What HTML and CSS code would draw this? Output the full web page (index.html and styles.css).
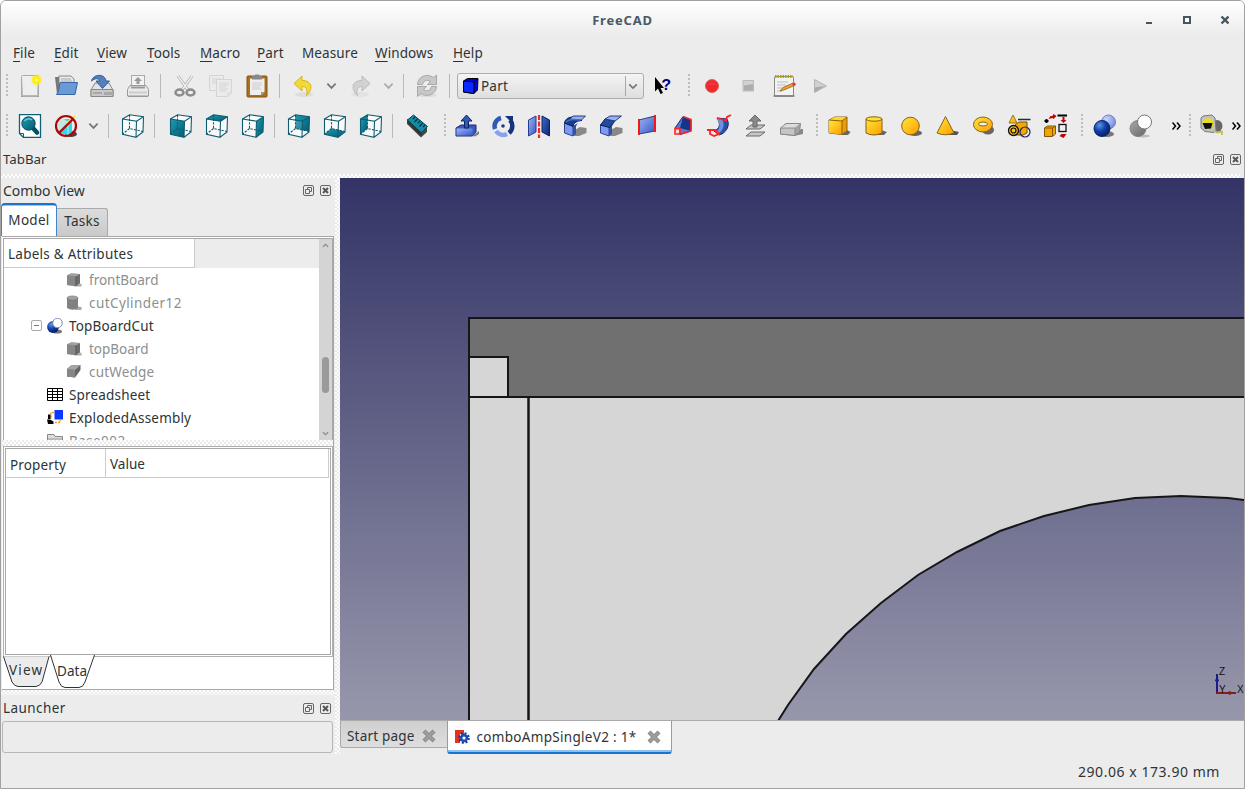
FILE: index.html
```
<!DOCTYPE html>
<html lang="en">
<head>
<meta charset="utf-8">
<title>FreeCAD</title>
<link rel="stylesheet" href="styles.css">
</head>
<body>
<svg class="defs" width="0" height="0">
  <defs>
    <linearGradient id="teal" x1="0" y1="0" x2="1" y2="1"><stop offset="0" stop-color="#1b9db4"/><stop offset="1" stop-color="#045a70"/></linearGradient>
    <linearGradient id="blue" x1="0" y1="0" x2="1" y2="1"><stop offset="0" stop-color="#a0b4f4"/><stop offset="1" stop-color="#3558c8"/></linearGradient>
    <linearGradient id="navy" x1="0" y1="0" x2="1" y2="1"><stop offset="0" stop-color="#3d6fd0"/><stop offset="1" stop-color="#0b2470"/></linearGradient>
    <linearGradient id="gray" x1="0" y1="0" x2="0" y2="1"><stop offset="0" stop-color="#f4f4f4"/><stop offset="1" stop-color="#b4b4b4"/></linearGradient>
    <linearGradient id="dark" x1="0" y1="0" x2="1" y2="1"><stop offset="0" stop-color="#aaa"/><stop offset="1" stop-color="#666"/></linearGradient>
    <linearGradient id="gold" x1="0" y1="0" x2="1" y2="1"><stop offset="0" stop-color="#ffe838"/><stop offset="1" stop-color="#ff9c00"/></linearGradient>
    <radialGradient id="ball" cx=".35" cy=".3" r=".75"><stop offset="0" stop-color="#5c96e8"/><stop offset=".5" stop-color="#123fa6"/><stop offset="1" stop-color="#031c64"/></radialGradient>
    <radialGradient id="pale" cx=".35" cy=".3" r=".75"><stop offset="0" stop-color="#c8d4ff"/><stop offset="1" stop-color="#6f88dc"/></radialGradient>
    <radialGradient id="sun"><stop offset="0" stop-color="#fff"/><stop offset=".3" stop-color="#fff200"/><stop offset=".7" stop-color="#ffee00" stop-opacity=".75"/><stop offset="1" stop-color="#fff200" stop-opacity="0"/></radialGradient>
    <linearGradient id="sky" x1="0" y1="0" x2="0" y2="1"><stop offset="0" stop-color="#333366"/><stop offset="1" stop-color="#9797ac"/></linearGradient>
    <symbol id="wire" viewBox="0 0 24 24"><g fill="none" stroke="#0e5c70" stroke-width="1.1"><path d="M2.5 5 16.5 7.2 16 23.2 2.5 20.2ZM2.5 5 9.5.7 23.5 2.7 16.5 7.2M23.5 2.7 23 18 16 23.2"/><path d="M9.5 1V14.5L23 17.5M9.5 14.5 2.5 20" stroke-dasharray="2.4 1.2"/></g></symbol>
    <symbol id="float" viewBox="0 0 11 11"><rect x=".5" y=".5" width="10" height="10" rx="1.5" fill="none" stroke="#666"/><path d="M4.5 2.5H8.5V6.5H4.5Z" fill="none" stroke="#666"/><path d="M2.5 4.5H6.5V8.500H2.5Z" fill="#ececec" stroke="#666"/></symbol>
    <symbol id="shut" viewBox="0 0 11 11"><rect x=".5" y=".5" width="10" height="10" rx="1.500" fill="none" stroke="#666"/><path d="M3 3 8 8M8 3 3 8" stroke="#555" stroke-width="2"/></symbol>
    <symbol id="chev" viewBox="0 0 12 8"><path d="M1.500 1.500 6 6 10.500 1.500" fill="none" stroke="currentColor" stroke-width="2"/></symbol>
    <symbol id="graybox" viewBox="0 0 16 16"><path d="M8 14 15.500 11.500V14.500H8Z" fill="#aaa"/><path d="M1 3.500 5 1.500 14 2V11.500L10 14 1 13Z" fill="#6d6d6d"/><path d="M1 3.500 10 4.500V14L1 13Z" fill="#868686"/><path d="M1 3.500 5 1.500 14 2 10 4.500Z" fill="#a0a0a0"/><path d="M10 4.500V14" stroke="#555"/></symbol>
    <symbol id="tabx" viewBox="0 0 14 14"><path d="M2 2 12 12M12 2 2 12" stroke="#858782" stroke-width="4.200"/><path d="M2.500 2.500 11.500 11.500M11.500 2.500 2.500 11.500" stroke="#9c9e99" stroke-width="2.600"/></symbol>
  </defs>
</svg>
<div class="window">
  <header class="titlebar">
    <span class="title">FreeCAD</span>
    <svg class="winbtns" width="84" height="12" viewBox="0 0 84 12"><path d="M1 9H7" stroke="#46565f" stroke-width="2"/><rect x="39" y="3" width="6" height="6" fill="#fff" stroke="#46565f" stroke-width="2"/><path d="M76.500 2.500 83.500 9.500M83.500 2.500 76.500 9.500" stroke="#46565f" stroke-width="2.400"/></svg>
  </header>
  <nav class="menu">
    <span class="m1"><u>F</u>ile</span><span class="m2"><u>E</u>dit</span><span class="m3"><u>V</u>iew</span><span class="m4"><u>T</u>ools</span><span class="m5"><u>M</u>acro</span><span class="m6"><u>P</u>art</span><span class="m7">Measure</span><span class="m8"><u>W</u>indows</span><span class="m9"><u>H</u>elp</span>
  </nav>

  <div class="bar bar1">
    <i class="handle first"></i>
    <svg class="tool" viewBox="0 0 24 24"><path d="M3 22.500H21" stroke="#888"/><rect x="3.500" y="1.500" width="17" height="21" rx="1" fill="url(#gray)" stroke="#aaa"/><rect x="5" y="3" width="14" height="18" fill="#eee"/><circle cx="18.500" cy="6" r="6" fill="url(#sun)"/></svg>
    <svg class="tool" viewBox="0 0 24 24"><path d="M1 3H8L9 5H20V19L3 20Z" fill="#777"/><path d="M5 2H17L20 5V11H5Z" fill="#e8e8e8" stroke="#888"/><path d="M7 5H17M7 7H18" stroke="#aaa"/><path d="M6 8.500H23.500L21 20.500H2.500C5 18 5 14 6 8.500Z" fill="#6a9ad4" stroke="#3767a8"/></svg>
    <svg class="tool" viewBox="0 0 24 24"><path d="M1 16 5 9H19L23 16V22.500H1Z" fill="#e2e2e2" stroke="#888"/><path d="M1 15.500H23V22.500H1Z" fill="#c8c8c8" stroke="#888"/><path d="M15 18V21M17 18V21M19 18V21M21 18V21M3 19H12" stroke="#888"/><path d="M1.500 7C3 0 15-1 16 7H19.500L12.500 14.500 6 7H9.500C9 4 5 4 1.500 7Z" fill="#5480ba" stroke="#315e9c"/></svg>
    <svg class="tool" viewBox="0 0 24 24"><rect x="5.500" y="1.500" width="13" height="12" fill="#f2f2f2" stroke="#aaa"/><path d="M12 3 16 7H13.500V10H10.500V7H8Z" fill="#999"/><path d="M1.500 15.500 4 11.500H20L22.500 15.500V22H1.500Z" fill="#eaeaea" stroke="#999"/><path d="M5 13.500H19" stroke="#999" stroke-width="2"/><path d="M2 22.500H22" stroke="#999"/><path d="M3 18.500H21" stroke="#ccc" stroke-width="2"/></svg>
    <i class="sep s11"></i>
    <svg class="tool" viewBox="0 0 24 24"><path d="M5 2 15 16M19 2 9 16" stroke="#aaa" stroke-width="3"/><path d="M5 2 15 16M19 2 9 16" stroke="#eee" stroke-width="1.500"/><ellipse cx="6.500" cy="18.500" rx="4" ry="3" fill="none" stroke="#8c8c8c" stroke-width="2.500"/><ellipse cx="17.500" cy="18.500" rx="4" ry="3" fill="none" stroke="#8c8c8c" stroke-width="2.500"/></svg>
    <svg class="tool" viewBox="0 0 24 24"><g fill="#ebebeb" stroke="#d4d4d4"><path d="M.5 1.500H14.500V16.500H.5Z"/><path d="M3 5H12M3 7H12M3 9H9"/><path d="M7.500 5.500H22.500V19L19 22.500H7.500Z"/><path d="M10 9H20M10 11H20M10 13H17M10 15H19M10 17H17M19 22V19H22"/></g></svg>
    <svg class="tool" viewBox="0 0 24 24"><rect x="2" y="2" width="20" height="21" rx="1" fill="#a87020" stroke="#855311"/><path d="M5 4.500H19.500V18L16 21H5Z" fill="#eee"/><path d="M7 9H17M7 11H17M7 13H15M7 15H16" stroke="#ccc"/><path d="M16 21V18H19.500Z" fill="#999"/><path d="M7 2H10V.5H14V2H17V5.500H7Z" fill="#888"/></svg>
    <i class="sep s10"></i>
    <svg class="tool" viewBox="0 0 24 24"><ellipse cx="13" cy="20.500" rx="9" ry="2.500" fill="#ddd"/><path d="M3 9.500 11 2V6.500C22 6.500 22 16 15.500 21.500 17 15 15 12.500 11 12.500V17Z" fill="#f4d838" stroke="#d4b61c"/></svg>
    <span class="drop d22"><svg width="11" height="8"><use href="#chev"/></svg></span>
    <svg class="tool" viewBox="0 0 24 24"><ellipse cx="11" cy="20.500" rx="9" ry="2.500" fill="#e2e2e2"/><path d="M21 9.500 13 2V6.500C2 6.500 2 16 8.500 21.500 7 15 9 12.500 13 12.500V17Z" fill="#d2d2d2" stroke="#bbb"/></svg>
    <span class="drop d20 off"><svg width="11" height="8"><use href="#chev"/></svg></span>
    <i class="sep s10"></i>
    <svg class="tool" viewBox="0 0 24 24"><ellipse cx="12" cy="21" rx="10" ry="2" fill="#ddd"/><g fill="#c8c8c8" stroke="#a8a8a8"><path d="M2.500 10.500C3 2 12-1 18.500 3.500L21.500 1V10.500H12.500L15.500 7.500C11.500 5 8.500 7 7.500 10.500Z"/><path d="M21.500 12.500C21 21 12 23.500 6 19.500L2.500 22.500V12.500H11.500L8.500 15.500C13 18.500 15.500 16 16.500 12.500Z"/></g></svg>
    <i class="sep s11b"></i>
    <div class="combo"><svg width="18" height="18" viewBox="0 0 18 18"><path d="M1.500 4 5.500 1.500H16L15.500 13 12 16.500 1.500 15Z" fill="#0000e0" stroke="#000"/><path d="M1.500 4 12 5V16.500L1.500 15Z" fill="#0a28ff" stroke="#000"/><path d="M12 5 16 1.500" stroke="#000"/></svg><span class="comboText">Part</span><span class="comboArrow"><svg width="10" height="7"><use href="#chev"/></svg></span></div>
    <svg class="tool" viewBox="0 0 24 24"><path d="M5 3V17.500L8 14.500 10.500 20 13 19 10.500 14H14Z" fill="#000"/><text x="11.500" y="16" class="qmark">?</text></svg>
    <i class="handle h14"></i>
    <svg class="tool" viewBox="0 0 24 24"><circle cx="12" cy="12" r="6.500" fill="#ef2929" stroke="#d86060"/><path d="M7 11Q12 4 17 11Z" fill="#f46" opacity=".4"/></svg>
    <svg class="tool" viewBox="0 0 24 24"><rect x="7" y="6.500" width="10.500" height="10.500" fill="#d2d2d2" stroke="#bbb"/><path d="M8 11.500 17 10V16.500H8Z" fill="#adadad"/></svg>
    <svg class="tool" viewBox="0 0 24 24"><rect x="2.500" y="2.500" width="19" height="19.500" rx="1" fill="#f2f2f2" stroke="#8a8a80"/><path d="M1.500 22H22.500" stroke="#777" stroke-width="1.500"/><path d="M3 2.500H21" stroke="#b39d16" stroke-width="3" stroke-dasharray="1.500 1"/><path d="M5 8H16M5 11H14M5 14H11M5 17H10" stroke="#bbb"/><path d="M8 17 11 13.500 21 9 22.500 11.500 12 16Z" fill="#f0a030" stroke="#80561a" stroke-width=".7"/><path d="M20 9.500 23 8.500 24 11 21 12Z" fill="#e03c36"/></svg>
    <svg class="tool" viewBox="0 0 24 24"><path d="M6.500 5.500 18.500 12 6.500 18.500Z" fill="#d0d0d0" stroke="#b4b4b4"/><path d="M7 13.500 16.500 12 7 18Z" fill="#a8a8a8"/></svg>
  </div>

  <div class="bar bar2">
    <i class="handle first"></i>
    <svg class="tool" viewBox="0 0 24 24"><path d="M1.500.5H22.500V23.500H5.500L1.500 19.500Z" fill="#fff" stroke="#0e6074" stroke-width="1.300"/><path d="M1.500 19.500H5.500V23.500" fill="none" stroke="#0e6074"/><path d="M14 13 19 18.500" stroke="#07505f" stroke-width="4.500" stroke-linecap="round"/><circle cx="10.500" cy="9.500" r="6.700" fill="url(#teal)" stroke="#064d60"/><path d="M6.500 7Q10 3 14 6" stroke="#6cc8dc" stroke-width="1.500" fill="none"/></svg>
    <svg class="tool" viewBox="0 0 24 24"><ellipse cx="17" cy="20" rx="6" ry="3" fill="#444"/><path d="M5 8 10 5H18V18L14 21 5 19Z" fill="#36d6e8"/><path d="M5 8 14 9V21" fill="none" stroke="#a7f4ff"/><path d="M4 12Q4 6 10 5L14 8 5 17Z" fill="#c2e8e4"/><path d="M13 9 21 2" stroke="#ffe63a" stroke-width="2"/><circle cx="12" cy="12" r="10" fill="none" stroke="#ad0808" stroke-width="2.200"/><path d="M5 19 19 5" stroke="#ad0808" stroke-width="2.200"/></svg>
    <span class="drop d20"><svg width="11" height="8"><use href="#chev"/></svg></span>
    <i class="sep s10"></i>
    <svg class="tool" viewBox="0 0 24 24"><path d="M2.500 5 9.500.7 23.500 2.700 23 18 16 23.200 2.500 20.200Z" fill="#fafafa"/><use href="#wire"/></svg>
    <i class="sep s12"></i>
    <svg class="tool" viewBox="0 0 24 24"><path d="M2.500 5 9.500.7 23.500 2.700 23 18 16 23.200 2.500 20.200Z" fill="#fafafa"/><path d="M2.500 5 16.500 7.200 16 23.200 2.500 20.200Z" fill="url(#teal)"/><use href="#wire"/></svg>
    <svg class="tool" viewBox="0 0 24 24"><path d="M2.500 5 9.500.7 23.500 2.700 23 18 16 23.200 2.500 20.200Z" fill="#fafafa"/><path d="M2.500 5 9.500.7 23.500 2.700 16.500 7.200Z" fill="url(#teal)"/><use href="#wire"/></svg>
    <svg class="tool" viewBox="0 0 24 24"><path d="M2.500 5 9.500.7 23.500 2.700 23 18 16 23.200 2.500 20.200Z" fill="#fafafa"/><path d="M16.500 7.200 23.500 2.700 23 18 16 23.200Z" fill="url(#teal)"/><use href="#wire"/></svg>
    <i class="sep s10"></i>
    <svg class="tool" viewBox="0 0 24 24"><path d="M2.500 5 9.500.7 23.500 2.700 23 18 16 23.200 2.500 20.200Z" fill="#fafafa"/><path d="M9.500.7 23.500 2.700 23 17.500 9.500 14.500Z" fill="url(#teal)"/><path d="M2.500 5 16.500 7.200 16 17 9.500 15 2.500 20Z" fill="#fafafa" opacity=".15"/><use href="#wire"/></svg>
    <svg class="tool" viewBox="0 0 24 24"><path d="M2.500 5 9.500.7 23.500 2.700 23 18 16 23.200 2.500 20.200Z" fill="#fafafa"/><path d="M2.500 20.200 9.500 14.500 23 17.500 16 23.200Z" fill="url(#teal)"/><use href="#wire"/></svg>
    <svg class="tool" viewBox="0 0 24 24"><path d="M2.500 5 9.500.7 23.500 2.700 23 18 16 23.200 2.500 20.200Z" fill="#fafafa"/><path d="M2.500 5 9.500.7V14.500L2.500 20.200Z" fill="url(#teal)"/><use href="#wire"/></svg>
    <i class="sep s12"></i>
    <svg class="tool" viewBox="0 0 24 24"><path d="M1 5V10L15 23.500 21 18V13Z" fill="#484848"/><path d="M7.500 1 21.500 12.500 15.500 19 1.500 6Z" fill="#138ba5" stroke="#063f4e"/><path d="M1.500 6.500 15.500 19V22.500L1.500 9Z" fill="#333"/><path d="M9 3 7 5M11.500 5 8.500 8M14 7 12 9M16.500 9 13.500 12.500M19 11 17 13" stroke="#04323d" stroke-width="1.200"/></svg>
    <i class="handle h13"></i>
    <svg class="tool" viewBox="0 0 24 24"><path d="M18 22 24 17V20L20 22.500Z" fill="#777"/><path d="M1 14 6 11H21V18L17.500 22H1Z" fill="#3a59ba" stroke="#18297c"/><path d="M1.500 14.500H17.500V21.500H1.500Z" fill="url(#blue)"/><path d="M11.500 1 17 7H13.500V14H9.500V7H6Z" fill="#315cae" stroke="#0c2269"/></svg>
    <svg class="tool" viewBox="0 0 24 24"><g fill="none"><path d="M10 4A8.500 8.500 0 0 0 4 15" stroke="#3158b6" stroke-width="4.500"/><path d="M5 17A8.500 8.500 0 0 0 16 20" stroke="#89a2ec" stroke-width="4.500"/><path d="M18 19A9 9 0 0 0 19 6" stroke="#15357f" stroke-width="4.500"/></g><path d="M14 2H22V10Z" fill="#14337d"/><path d="M8 7 16 15 12 18 7 13Z" fill="#eee"/><circle cx="12" cy="12" r="1.800" fill="#24387b"/></svg>
    <svg class="tool" viewBox="0 0 24 24"><path d="M1.500 6 9 2V18L1.500 22Z" fill="url(#blue)" stroke="#263d88"/><path d="M15 2 22.500 6V22L15 18Z" fill="url(#navy)" stroke="#102058"/><path d="M12 1V24" stroke="#f22" stroke-width="2.200" stroke-dasharray="5 1.500"/></svg>
    <svg class="tool" viewBox="0 0 24 24"><path d="M10 17 17 13 23.500 14V19L16 22H10Z" fill="#888"/><path d="M1.500 9V19L10 22V12Z" fill="#7e9aee" stroke="#2a4290"/><path d="M10 12V22L13 20V12L15 9Z" fill="#3150aa"/><path d="M1.500 9C2 5 6 3 10 3H14L19 6.500C14 7 11 8 10 12.500Z" fill="#163c8c" stroke="#0c2050"/><path d="M10 2H22.500L18.500 6H6.500Z" fill="#9bb0f0" stroke="#263d88"/><path d="M3 8.500C5 5 11 5 17 6" fill="none" stroke="#3b70cb" stroke-width="1.500"/></svg>
    <svg class="tool" viewBox="0 0 24 24"><path d="M10 17 17 13 23.500 14V19L16 22H10Z" fill="#888"/><path d="M1.500 11V19L10 22V13Z" fill="#7e9aee" stroke="#2a4290"/><path d="M10 12V22L13 20V12L15 9Z" fill="#3150aa"/><path d="M1.500 11 6 5 16 7 10.500 13.500Z" fill="#204ba2" stroke="#0c2050"/><path d="M6 5 11 2H22.500L16 7Z" fill="#9bb0f0" stroke="#263d88"/></svg>
    <svg class="tool" viewBox="0 0 24 24"><path d="M4 6 20 2V17L4 20Z" fill="url(#blue)" stroke="#293b8d"/><path d="M4 5V21M20 1V18" stroke="#f01818" stroke-width="2"/></svg>
    <svg class="tool" viewBox="0 0 24 24"><path d="M4 14 12 2.500 20 6V17L9 20.500Z" fill="#5878d4" stroke="#1b2a72"/><path d="M12 3 20 6V17L9 14Z" fill="#173488"/><path d="M4 14.500H9V20H4ZM12 2.500 20 5.500V17L10 20" fill="none" stroke="#f22" stroke-width="1.600"/><rect x="5" y="15.500" width="3" height="3.500" fill="#ffd8d8"/></svg>
    <svg class="tool" viewBox="0 0 24 24"><path d="M7 17C13 15 14 10 10 4L20 5C24 12 18 20 12 21Z" fill="#2b4faa" stroke="#15296b"/><path d="M10 5C14 11 13 16 8 18L11 20C17 16 18 10 15 5Z" fill="#6e8fe2"/><path d="M10 4 19 6.500 20 3 24 1" fill="none" stroke="#f22" stroke-width="1.800"/><path d="M0 16H8L12 20 7 22 3 20V16" fill="none" stroke="#f22" stroke-width="1.800"/></svg>
    <svg class="tool" viewBox="0 0 24 24"><path d="M3 22 8 18H22L17 22ZM3 15 8 11H22L17 15Z" fill="#c6c6c6" stroke="#6b6b6b"/><path d="M12 1 18 7H14V13H10V7H6Z" fill="#8b8b8b" stroke="#666"/></svg>
    <svg class="tool" viewBox="0 0 24 24"><path d="M15 22 22 15H24V20Z" fill="#888"/><path d="M1.500 14 7 9.500H21.500L20.500 18 16 21.500 1.500 20Z" fill="#a2a2a2" stroke="#888"/><path d="M1.500 14H16V21.500L1.500 20Z" fill="#c5c5c5" stroke="#888"/><path d="M2.500 13.500 7.500 10H20.500L16 13.500Z" fill="#ddd"/></svg>
    <i class="handle h12"></i>
    <svg class="tool" viewBox="0 0 24 24"><path d="M18 15 23.500 18 21 21H12Z" fill="#666"/><path d="M2 6 8 3H20V17L15 20.500 2 19Z" fill="#ee9c00" stroke="#866118"/><path d="M2 6 15 7V20.500L2 19Z" fill="url(#gold)"/><path d="M2 6 8 3H20L15 7Z" fill="#ffd720"/><path d="M15 7V20.500M2 6 15 7 20 3" stroke="#866118" fill="none"/></svg>
    <svg class="tool" viewBox="0 0 24 24"><path d="M18 16 24 18 21 21H12Z" fill="#666"/><path d="M3 5V19Q11 23 19 19V5Z" fill="url(#gold)" stroke="#866118"/><ellipse cx="11" cy="5" rx="8" ry="2.200" fill="#ffe32b" stroke="#866118"/></svg>
    <svg class="tool" viewBox="0 0 24 24"><ellipse cx="16" cy="19" rx="7" ry="3" fill="#666"/><circle cx="11.500" cy="12" r="8.800" fill="url(#gold)" stroke="#866118"/></svg>
    <svg class="tool" viewBox="0 0 24 24"><path d="M15 16 24 18 22 21H12Z" fill="#555"/><path d="M10.500 2.500 19 19Q10.500 22.500 2 19Z" fill="url(#gold)" stroke="#866118"/></svg>
    <svg class="tool" viewBox="0 0 24 24"><ellipse cx="17" cy="16" rx="6" ry="4.500" fill="#666"/><ellipse cx="12" cy="10.500" rx="9.500" ry="7.500" fill="url(#gold)" stroke="#866118"/><ellipse cx="12" cy="10" rx="4.500" ry="2" fill="#eee" stroke="#866118"/></svg>
    <svg class="tool" viewBox="0 0 24 24"><path d="M8 11 12 8H20V19L16 21H8Z" fill="#f5a700" stroke="#715010"/><path d="M6 1 10 9H2Z" fill="url(#gold)" stroke="#9c7414"/><path d="M11 5.500H23.500" stroke="#153728" stroke-width="1.300"/><circle cx="6.500" cy="16.500" r="5" fill="#f5bd20" stroke="#111" stroke-width="1.300"/><circle cx="6.500" cy="16.500" r="2.500" fill="none" stroke="#111" stroke-width="1.200"/><circle cx="18" cy="18" r="5" fill="none" stroke="#1c2268" stroke-width="1.200"/></svg>
    <svg class="tool nudge" viewBox="0 0 24 24"><path d="M1 14 4 12H12V20L9 22.500H1Z" fill="#f4a400" stroke="#80580b"/><path d="M1 14H9L12 12M9 14V22" fill="none" stroke="#80580b"/><path d="M1 7H5M3 5V9M14 1.500H23.500" stroke="#000" stroke-width="2"/><rect x="15.500" y="10.500" width="7" height="7" fill="none" stroke="#111" stroke-width="1.300"/><path d="M5 5 7 2H9L10 0 13 2 10 5 9 4ZM19 3H21V6H23L20 9 17 6H19ZM16 22 18 20H23L20 24Z" fill="#c4000b"/></svg>
    <i class="handle h14"></i>
    <svg class="tool" viewBox="0 0 24 24"><ellipse cx="14" cy="20" rx="7" ry="3" fill="#777"/><circle cx="15.500" cy="8" r="7" fill="url(#pale)" stroke="#7382bc"/><circle cx="9" cy="14.500" r="8" fill="url(#ball)" stroke="#08266d"/></svg>
    <svg class="tool" viewBox="0 0 24 24"><ellipse cx="14" cy="22" rx="7" ry="1.500" fill="#bbb"/><circle cx="9" cy="14.500" r="8" fill="url(#dark)" stroke="#858585"/><circle cx="15.500" cy="8" r="7" fill="#fff" stroke="#777"/></svg>
    <span class="more w25"><svg width="9" height="8" viewBox="0 0 9 8"><path d="M.5.500 3.500 4 .5 7.500M5 .5 8 4 5 7.500" fill="none" stroke="#000" stroke-width="1.500"/></svg></span>
    <i class="handle h10"></i>
    <svg class="tool" viewBox="0 0 24 24"><ellipse cx="17" cy="12" rx="5.500" ry="6" fill="#666"/><path d="M1 4 3 2 12 1 15 4 16 16 14 18.500 5 17.500 1 14Z" fill="#c2c2c2" stroke="#777"/><circle cx="8" cy="9.500" r="5.500" fill="#e8dd20"/><path d="M2.500 9H12.500L11 14.500 5 15Z" fill="#111"/><path d="M14 16.500 17 18.500 22 17.500V21" fill="none" stroke="#c3bc59" stroke-width="1.800"/></svg>
    <span class="more w13"><svg width="9" height="8" viewBox="0 0 9 8"><path d="M.5.500 3.500 4 .5 7.500M5 .5 8 4 5 7.500" fill="none" stroke="#000" stroke-width="1.500"/></svg></span>
  </div>

  <div class="dockTitle tabbar"><span>TabBar</span><span class="dockBtns"><svg width="11" height="11"><use href="#float"/></svg><svg width="11" height="11"><use href="#shut"/></svg></span></div>
  <div class="dither top"></div>

  <main class="main">
    <aside class="left">
      <div class="dockTitle combined"><span>Combo View</span><span class="dockBtns"><svg width="11" height="11"><use href="#float"/></svg><svg width="11" height="11"><use href="#shut"/></svg></span></div>
      <div class="tabs"><span class="tab active">Model</span><span class="tab">Tasks</span></div>
      <div class="frame">
        <div class="tree">
          <div class="treeBody">
            <div class="treeHead"><span>Labels &amp; Attributes</span></div>
            <div class="row deep dim"><svg width="16" height="16"><use href="#graybox"/></svg><span>frontBoard</span></div>
            <div class="row deep dim"><svg width="16" height="16" viewBox="0 0 16 16"><path d="M9 11 15.500 12V15H9Z" fill="#aaa"/><path d="M1 3V13Q6.500 16.500 12 13V3Z" fill="#818181"/><ellipse cx="6.500" cy="3" rx="5.500" ry="2" fill="#a2a2a2" stroke="#777" stroke-width=".7"/></svg><span class="wide">cutCylinder12</span></div>
            <div class="row open"><i class="minus"></i><svg width="16" height="16" viewBox="0 0 16 16"><ellipse cx="10" cy="13.500" rx="5" ry="2" fill="#777"/><circle cx="6" cy="9" r="5.900" fill="url(#ball)"/><circle cx="10.500" cy="5" r="4.800" fill="#fff" stroke="#7f8ac0"/></svg><span class="mild">TopBoardCut</span></div>
            <div class="row deep dim"><svg width="16" height="16"><use href="#graybox"/></svg><span>topBoard</span></div>
            <div class="row deep dim"><svg width="16" height="16" viewBox="0 0 16 16"><path d="M1 5 5 1.500 14.500 1V6L9 13.500 1 12.500Z" fill="#666"/><path d="M1 5 9 6V13.500L1 12.500Z" fill="#868686"/><path d="M1 5 5 1.500 14.500 1 9 6Z" fill="#a5a5a5"/></svg><span class="mild">cutWedge</span></div>
            <div class="row mid"><svg width="16" height="16" viewBox="0 0 16 16"><path d="M.5 1.500H15.500V13.500H.5ZM.5 4.500H15.500M.5 7.500H15.500M.5 10.500H15.500M5.500 1.500V13.500M10.500 1.500V13.500" fill="#fff" stroke="#000"/></svg><span class="mild">Spreadsheet</span></div>
            <div class="row mid"><svg width="16" height="16" viewBox="0 0 16 16"><rect x="7.500" y="0" width="8.500" height="9.500" fill="#0a36ff"/><path d="M7 2.500H4V9M8 12.500H13V10" fill="none" stroke="#f59a20" stroke-width="1.500" stroke-dasharray="2 1"/><path d="M1 4.500H3.500V9H1ZM0 9.500H3L6.500 11.500V14H1Z" fill="#000"/></svg><span class="mild">ExplodedAssembly</span></div>
            <div class="row mid dim"><svg width="16" height="16" viewBox="0 0 16 16"><path d="M.5 1.500H7L8 3.500H15.500V14H.5Z" fill="#ddd" stroke="#888"/><path d="M1 6H15" stroke="#999"/></svg><span class="wide">Base002</span></div>
          </div>
          <div class="scroll"><svg width="7" height="5"><use href="#chev"/></svg><i class="thumb"></i><svg class="down" width="7" height="5"><use href="#chev"/></svg></div>
        </div>
        <div class="dither split"></div>
        <div class="props"><div class="propHead"><span class="pName">Property</span><span class="pValue">Value</span></div></div>
        <div class="bottomTabs"><svg width="93" height="35" viewBox="0 0 93 35"><path d="M.5 1.500 9 27Q11 31 15 31.500H33Q37 31 39 27L46 1.500" fill="#ececec" stroke="#2e3436"/><path d="M47.500 0 56 27Q58 32.500 62 32.500H76Q80 32.500 82 27L91.500 0" fill="#fff" stroke="#2e3436"/><text x="6" y="20" textLength="33">View</text><text x="54" y="21" textLength="30">Data</text></svg></div>
      </div>
      <div class="dither low"></div>
      <div class="dockTitle launcher"><span class="wide">Launcher</span><span class="dockBtns"><svg width="11" height="11"><use href="#float"/></svg><svg width="11" height="11"><use href="#shut"/></svg></span></div>
      <div class="launchBox"></div>
    </aside>
    <div class="dither side"></div>
    <section class="mdi">
      <svg class="scene" width="904" height="542" viewBox="340 178 904 542">
        <rect x="340" y="178" width="904" height="542" fill="url(#sky)"/>
        <path d="M469 397H1250V500L1228 498 1181 496 1135 498 1089 505 1044 516 1000 531 957 552 918 575 881 603 846 634 814 669 788 705 778 721H469Z" fill="#d6d6d6"/>
        <rect x="469" y="318" width="790" height="79" fill="#707070"/>
        <rect x="469" y="357" width="39" height="39" fill="#d6d6d6"/>
        <g fill="none" stroke="#16161a" stroke-width="2"><path d="M1250 318H469V725M469 397H1250M469 357H508V396"/><path d="M528.500 397V725" stroke-width="2.500"/><path d="M1250 501 1244 500 1228 498 1181 496 1135 498 1089 505 1044 516 1000 531 957 552 918 575 881 603 846 634 814 669 788 705 778 721"/></g>
        <path d="M1217 693V674" stroke="#1c1c86" stroke-width="2"/><path d="M1215.500 681 1217 677 1218.500 681Z" fill="#1c1c86" stroke="#1c1c86"/>
        <path d="M1216 693H1236" stroke="#8b1a1a" stroke-width="2"/><path d="M1229 691.500 1233 693 1229 694.500Z" fill="#8b1a1a" stroke="#8b1a1a"/>
        <g class="axis"><text x="1219" y="675">Z</text><text x="1219" y="693">Y</text><text x="1237" y="693">X</text></g>
      </svg>
      <div class="docTabs">
        <div class="doc"><span>Start page</span><svg width="14" height="14"><use href="#tabx"/></svg></div>
        <div class="doc on"><svg width="16" height="16" viewBox="0 0 16 16"><path d="M1 1H10V5H6V7H9V10H6V14H1Z" fill="#e8301c"/><circle cx="10" cy="9" r="4.200" fill="#1c50b8"/><circle cx="10" cy="9" r="4.800" fill="none" stroke="#143c94" stroke-width="2" stroke-dasharray="2 1.770"/><circle cx="10" cy="9" r="1.600" fill="#fff"/></svg><span class="docName">comboAmpSingleV2 : 1*</span><svg width="14" height="14"><use href="#tabx"/></svg></div>
      </div>
    </section>
  </main>
  <footer class="status">290.06 x 173.90 mm</footer>
</div>
</body>
</html>
```
FILE: styles.css
```
* { box-sizing: border-box; }
html, body { margin: 0; height: 100%; background: #fff; }
body { font: 13.5px/20px "Noto Sans", "Open Sans", sans-serif; color: #2e3436; overflow: hidden; }
svg { display: block; flex: none; }
.defs { position: absolute; }
.window { width: 1245px; height: 789px; display: flex; flex-direction: column; border: 1px solid #a1a1a1; border-radius: 6px 6px 0 0; background: #ececec; overflow: hidden; }
.titlebar { height: 37px; flex: none; display: grid; grid-template-columns: 1fr auto 1fr; align-items: center; background: linear-gradient(#fff, #ececec 34px); }
.title { grid-column: 2; font-weight: 700; font-size: 13px; color: #4a5a64; letter-spacing: .8px; }
.winbtns { justify-self: end; margin-right: 15px; }
.menu { height: 30px; flex: none; display: flex; align-items: center; padding-left: 12px; white-space: nowrap; }
.menu span { flex: none; letter-spacing: .1px; }
.menu u { text-underline-offset: 3px; text-decoration-thickness: 1px; }
.m1 { width: 41px; } .m2 { width: 43px; } .m3 { width: 50px; } .m4 { width: 53px; } .m5 { width: 57px; } .m6 { width: 45px; } .m7 { width: 73px; } .m8 { width: 78px; }
.bar { flex: none; display: flex; align-items: center; }
.bar1 { height: 36px; }
.bar2 { height: 44px; }
.tool { width: 36px; height: 24px; flex: none; }
.handle { width: 12px; height: 24px; flex: none; background: radial-gradient(circle at 1px 1px, #bdbdbd 1px, transparent 1.3px) 70% 0 / 2px 4px repeat-y; }
.handle.first { width: 11px; background-position-x: 5px; }
.h14 { width: 14px; } .h13 { width: 13px; } .h10 { width: 10px; background-position-x: 5px; }
.nudge { padding-left: 1px; }
.sep { height: 24px; flex: none; background: linear-gradient(#b9b9b9, #b9b9b9) 40% 0 / 1px 100% no-repeat; }
.s10 { width: 10px; } .s11 { width: 11px; } .s11b { width: 12px; } .s12 { width: 12px; }
.drop { flex: none; display: flex; justify-content: center; padding-right: 2px; color: #777; }
.d22 { width: 22px; } .d20 { width: 20px; }
.off { color: #aaa; }
.combo { width: 187px; height: 26px; flex: none; display: flex; align-items: center; padding-left: 4px; border: 1px solid #adadad; border-radius: 3px; background: linear-gradient(#f4f4f4, #dedede); }
.comboText { flex: 1; padding-left: 1px; letter-spacing: .2px; }
.comboArrow { height: 20px; width: 18px; padding-right: 3px; display: flex; align-items: center; justify-content: center; border-left: 1px solid #a8a8a8; color: #777; }
.qmark { font: bold 16px "Liberation Mono", monospace; fill: #000080; }
.more { flex: none; display: flex; justify-content: center; }
.w25 { width: 25px; padding-left: 9px; } .w13 { width: 13px; }
.dockTitle { height: 25px; flex: none; display: flex; align-items: center; justify-content: space-between; padding: 0 3px 0 2px; }
.tabbar { height: 26px; padding: 0 3px 4px 2px; font-size: 13.3px; }
.combined { font-size: 14px; }
.dockBtns { display: flex; gap: 6px; }
.dither { flex: none; background: repeating-conic-gradient(#fdfdfd 0 25%, #eaeaea 0 50%) 0 0 / 4px 4px; }
.dither.top { height: 4px; margin-right: 4px; }
.main { height: 576px; flex: none; display: flex; }
.left { width: 333px; display: flex; flex-direction: column; }
.tabs { height: 33px; display: flex; align-items: flex-end; }
.tab { height: 28px; width: 51px; display: flex; align-items: center; justify-content: center; padding-bottom: 3px; border: 1px solid #aaa; border-left: 0; border-bottom: 0; border-radius: 0 3px 0 0; background: linear-gradient(#dcdcdc, #c9c9c9); letter-spacing: .3px; }
.tab.active { height: 33px; width: 56px; padding-bottom: 2px; border: 1px solid #3e86d0; border-top: 2px solid #1a73cc; border-bottom: 0; border-radius: 4px 4px 0 0; background: linear-gradient(#9cc7f0 0 1px, #fff 1px); }
.frame { height: 454px; flex: none; margin-left: 1px; border: 1px solid #a8a8a8; border-left: 0; background: #fff; display: flex; flex-direction: column; }
.tree { height: 202px; flex: none; display: flex; border: 1px solid #a8a8a8; border-bottom: 0; margin: 1px 0 0 1px; overflow: hidden; }
.treeBody { flex: 1; overflow: hidden; }
.treeHead { height: 29px; background: #ececec; }
.treeHead span { display: flex; align-items: center; width: 191px; height: 29px; padding: 2px 0 0 4px; background: #fff; border: solid #ccc; border-width: 0 1px 1px 0; letter-spacing: .25px; }
.row { height: 23px; display: flex; align-items: center; white-space: nowrap; }
.row span { padding-left: 7px; }
.deep { padding-left: 62px; } .mid { padding-left: 43px; } .open { padding-left: 27px; }
.row.mid span, .row.open span { padding-left: 6px; }
.mild { letter-spacing: .18px; }
.wide { letter-spacing: .42px; }
.dim { color: #8c8f8e; }
.minus { width: 11px; height: 11px; margin-right: 5px; border: 1px solid #aaa; border-radius: 2px; background: linear-gradient(#777, #777) center / 5px 1px no-repeat; }
.scroll { width: 13px; background: #d4d4d4; color: #888; display: flex; flex-direction: column; align-items: center; padding: 4px 0; }
.scroll svg:first-child { transform: scaleY(-1); }
.thumb { width: 7px; height: 36px; margin-top: 109px; border-radius: 4px; background: #999a9a; }
.scroll .down { margin-top: auto; }
.split { height: 6px; }
.props { height: 207px; flex: none; margin: 2px 2px 0 3px; border: 1px solid #a8a8a8; box-shadow: 0 0 0 1px #fff, 0 0 0 2px #b0b0b0; background: #fff; padding: 0 1px 0 0; }
.propHead { display: flex; height: 29px; align-items: center; border: solid #ccc; border-width: 0 1px 1px 0; }
.pName { width: 100px; padding: 2px 0 0 4px; height: 28px; line-height: 28px; border-right: 1px solid #ccc; letter-spacing: .15px; }
.pValue { padding: 2px 0 0 4px; }
.bottomTabs { height: 35px; flex: none; padding-left: 1px; }
.bottomTabs svg { position: relative; z-index: 1; }
.bottomTabs text { fill: #2e3436; }
.low { height: 5px; }
.launcher { height: 26px; }
.launchBox { height: 32px; margin: 0 1px; border: 1px solid #b6b6b6; border-radius: 3px; }
.side { width: 6px; height: 576px; border-left: 1px solid #ececec; }
.mdi { width: 904px; }
.docTabs { display: flex; align-items: flex-start; border-top: 1px solid #aaa; }
.doc { width: 107px; height: 27px; display: flex; align-items: center; justify-content: space-between; padding: 4px 11px 0 6px; border: 1px solid #aaa; border-top: 0; border-right: 0; border-radius: 0 0 0 3px; background: linear-gradient(#cfcfcf, #dedede); letter-spacing: .2px; white-space: nowrap; }
.doc.on { width: 225px; height: 33px; padding: 0 10px 0 6px; background: linear-gradient(#fff 29px, #8ec0ee 29px); border: 1px solid #8a9fb5; border-top: 0; border-bottom: 2px solid #1a73cc; border-radius: 0 0 3px 3px; }
.docName { margin-left: -4px; letter-spacing: .31px; }
.axis { font: 10px "Liberation Sans", sans-serif; fill: #111; }
.status { flex: 1; display: flex; align-items: center; justify-content: flex-end; padding: 2px 24px 0 0; font-size: 14px; letter-spacing: .55px; }
```
